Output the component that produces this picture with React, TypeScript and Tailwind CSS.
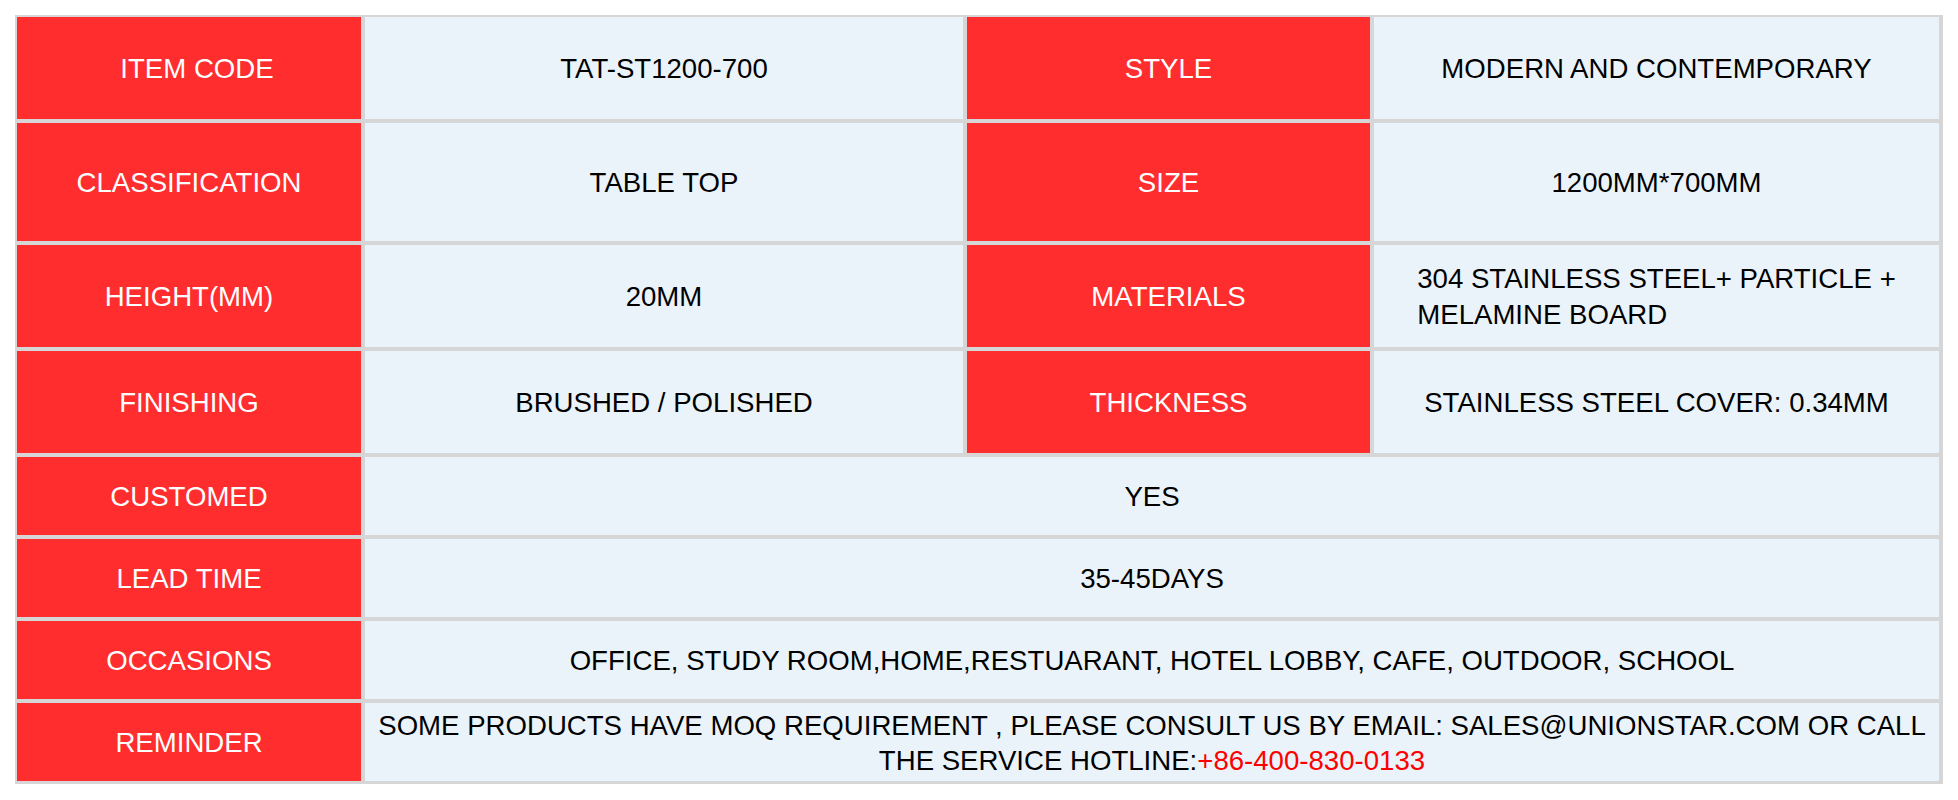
const rows: { label: string; value: string; label2: string; value2: string; tall?: boolean }[] = [
    { label: 'ITEM CODE', value: 'TAT-ST1200-700', label2: 'STYLE', value2: 'MODERN AND CONTEMPORARY' },
    { label: 'CLASSIFICATION', value: 'TABLE TOP', label2: 'SIZE', value2: '1200MM*700MM', tall: true },
    { label: 'HEIGHT(MM)', value: '20MM', label2: 'MATERIALS', value2: '' },
    { label: 'FINISHING', value: 'BRUSHED / POLISHED', label2: 'THICKNESS', value2: 'STAINLESS STEEL COVER: 0.34MM' },
];

const wideRows = [
    { label: 'CUSTOMED', value: 'YES' },
    { label: 'LEAD TIME', value: '35-45DAYS' },
    { label: 'OCCASIONS', value: 'OFFICE, STUDY ROOM,HOME,RESTUARANT, HOTEL LOBBY, CAFE, OUTDOOR, SCHOOL' },
];

function Label({ text, className = '' }: { text: string; className?: string }) {
    return (
        <div className={`bg-[#ff2d2e] text-white flex items-center justify-center text-center ${className}`}>
            {text}
        </div>
    );
}

function Value({ children, className = '' }: { children: React.ReactNode; className?: string }) {
    return (
        <div className={`bg-[#ebf3fa] text-black flex items-center justify-center text-center ${className}`}>
            {children}
        </div>
    );
}

export default function App() {
    return (
        <div className="bg-white w-[1958px] h-[800px] pt-[15px] pl-[15px] font-['Liberation_Sans',Arial,sans-serif] text-[27.6px] leading-[36px]">
            <div className="inline-grid grid-cols-[344px_598px_403px_565px] gap-[4px] bg-[#d6d6d6] pl-[2px] pt-[2px] pr-[4px] pb-[3px]">
                {rows.map((row, idx) => {
                    const h = row.tall ? 'h-[118px]' : 'h-[102px]';
                    return (
                        <div key={idx} className="contents">
                            <Label text={row.label} className={`${h} pt-[2px] ${idx === 0 ? 'pl-[16px]' : ''}`} />
                            <Value className={`${h} pt-[2px]`}>{row.value}</Value>
                            <Label text={row.label2} className={`${h} pt-[2px]`} />
                            {row.label2 === 'MATERIALS' ? (
                                <Value className={`${h} pt-[2px]`}>
                                    <div className="inline-block text-left">
                                        304 STAINLESS STEEL+ PARTICLE +
                                        <br />
                                        MELAMINE BOARD
                                    </div>
                                </Value>
                            ) : (
                                <Value className={`${h} pt-[2px]`}>{row.value2}</Value>
                            )}
                        </div>
                    );
                })}
                {wideRows.map((row) => (
                    <div key={row.label} className="contents">
                        <Label text={row.label} className="h-[78px] pt-[2px]" />
                        <Value className="h-[78px] pt-[2px] col-span-3">{row.value}</Value>
                    </div>
                ))}
                <Label text="REMINDER" className="h-[78px] pt-[2px]" />
                <Value className="h-[78px] pt-[2px] col-span-3 leading-[35px]">
                    <div className="whitespace-nowrap">
                        SOME PRODUCTS HAVE MOQ REQUIREMENT , PLEASE CONSULT US BY EMAIL: SALES@UNIONSTAR.COM OR CALL
                        <br />
                        THE SERVICE HOTLINE:<span className="text-[#ff0000]">+86-400-830-0133</span>
                    </div>
                </Value>
            </div>
        </div>
    );
}
